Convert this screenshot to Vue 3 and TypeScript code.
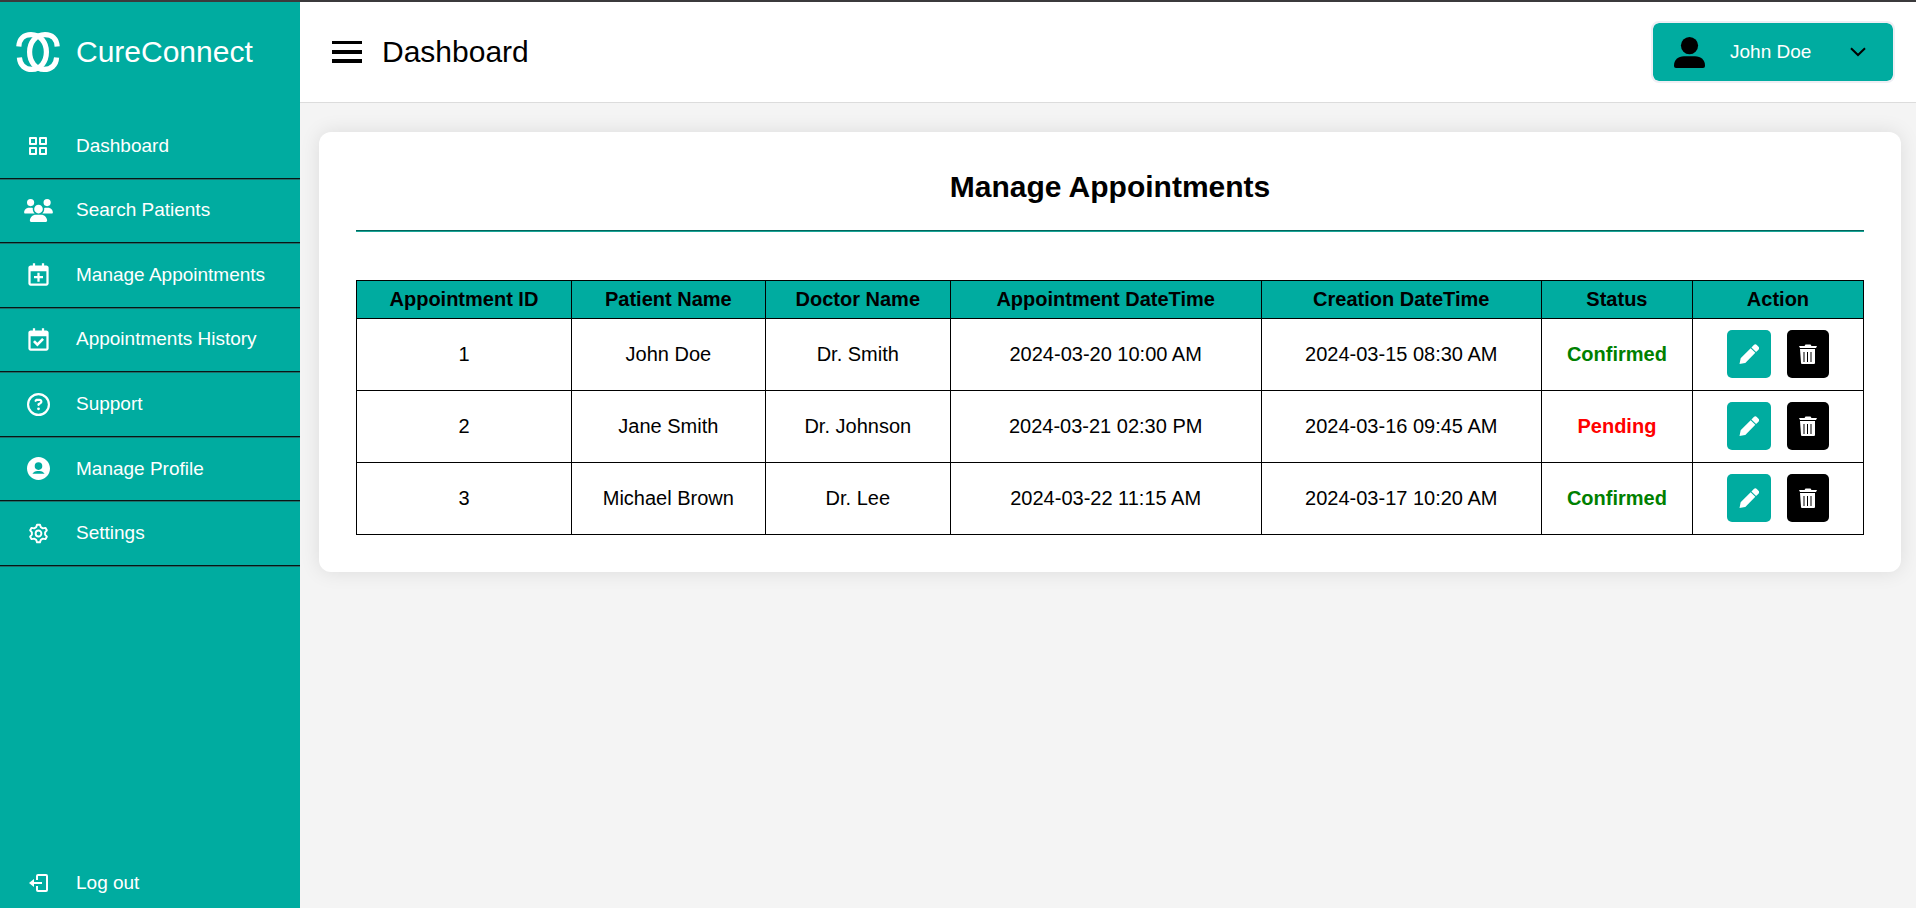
<script setup lang="ts">
interface Shape {
  d: string
  stroke?: boolean
}

interface MenuItem {
  label: string
  viewBox: string
  width: number
  height: number
  shapes: Shape[]
}

interface Appointment {
  id: number
  patient: string
  doctor: string
  scheduled: string
  created: string
  status: 'Confirmed' | 'Pending'
}

const calendarFrame =
  'M19 4h-2V2h-2v2H9V2H7v2H5c-1.103 0-2 .897-2 2v14c0 1.103.897 2 2 2h14c1.103 0 2-.897 2-2V6c0-1.103-.897-2-2-2zM19 20H5V9h14z'

const menu: MenuItem[] = [
  {
    label: 'Dashboard',
    viewBox: '0 0 24 24',
    width: 24,
    height: 24,
    shapes: [
      {
        d: 'M10 3H4a1 1 0 0 0-1 1v6a1 1 0 0 0 1 1h6a1 1 0 0 0 1-1V4a1 1 0 0 0-1-1zM9 9H5V5h4v4zm11-6h-6a1 1 0 0 0-1 1v6a1 1 0 0 0 1 1h6a1 1 0 0 0 1-1V4a1 1 0 0 0-1-1zm-1 6h-4V5h4v4zm-9 4H4a1 1 0 0 0-1 1v6a1 1 0 0 0 1 1h6a1 1 0 0 0 1-1v-6a1 1 0 0 0-1-1zm-1 6H5v-4h4v4zm11-6h-6a1 1 0 0 0-1 1v6a1 1 0 0 0 1 1h6a1 1 0 0 0 1-1v-6a1 1 0 0 0-1-1zm-1 6h-4v-4h4v4z',
      },
    ],
  },
  {
    label: 'Search Patients',
    viewBox: '0 0 640 512',
    width: 29,
    height: 23,
    shapes: [
      {
        d: 'M144 0a80 80 0 1 1 0 160A80 80 0 1 1 144 0zM512 0a80 80 0 1 1 0 160A80 80 0 1 1 512 0zM0 298.700C0 239.800 47.800 192 106.700 192h42.700c15.900 0 31 3.500 44.600 9.700c-1.300 7.200-1.900 14.700-1.900 22.300c0 38.200 16.800 72.500 43.300 96H21.300C9.600 320 0 310.400 0 298.700zM404.600 320c26.600-23.500 43.300-57.800 43.300-96c0-7.600-.7-15-1.900-22.300c13.600-6.300 28.700-9.700 44.600-9.700h42.700C592.200 192 640 239.800 640 298.700c0 11.800-9.600 21.300-21.300 21.300zM224 224a96 96 0 1 1 192 0 96 96 0 1 1-192 0zM128 485.300C128 411.700 187.700 352 261.300 352H378.700C452.300 352 512 411.700 512 485.300c0 14.700-11.900 26.700-26.700 26.700H154.700c-14.700 0-26.700-11.900-26.700-26.700z',
      },
    ],
  },
  {
    label: 'Manage Appointments',
    viewBox: '0 0 24 24',
    width: 27,
    height: 27,
    shapes: [{ d: calendarFrame }, { d: 'M8 15.400h3v3h2v-3h3v-2h-3v-3h-2v3H8z' }],
  },
  {
    label: 'Appointments History',
    viewBox: '0 0 24 24',
    width: 27,
    height: 27,
    shapes: [
      { d: calendarFrame },
      { d: 'm11 18.200 5.900-5.900-1.700-1.700L11 14.800l-2.200-2.200-1.700 1.700z' },
    ],
  },
  {
    label: 'Support',
    viewBox: '0 0 512 512',
    width: 23,
    height: 23,
    shapes: [
      {
        d: 'M464 256A208 208 0 1 0 48 256a208 208 0 1 0 416 0zM0 256a256 256 0 1 1 512 0A256 256 0 1 1 0 256zm169.800-90.700c7.900-22.300 29.100-37.300 52.800-37.300h58.300c34.900 0 63.100 28.300 63.100 63.100c0 22.600-12.100 43.500-31.700 54.800L280 264.400c-.2 13-10.900 23.600-24 23.600c-13.300 0-24-10.700-24-24V250.500c0-8.600 4.600-16.500 12.100-20.800l44.300-25.400c4.700-2.700 7.600-7.700 7.600-13.100c0-8.400-6.800-15.100-15.100-15.100H222.600c-3.400 0-6.400 2.100-7.500 5.300l-.4 1.200c-4.400 12.500-18.200 19-30.600 14.600s-19-18.200-14.600-30.600l.4-1.200zM224 352a32 32 0 1 1 64 0 32 32 0 1 1-64 0z',
      },
    ],
  },
  {
    label: 'Manage Profile',
    viewBox: '2 2 20 20',
    width: 23,
    height: 23,
    shapes: [
      {
        d: 'M12 2C6.579 2 2 6.579 2 12s4.579 10 10 10 10-4.579 10-10S17.421 2 12 2zm0 4.600a3.300 3.300 0 1 1 0 6.600a3.300 3.300 0 1 1 0-6.600zM6.700 16.600c.9-1.500 2.500-2.500 4.300-2.500h2c1.800 0 3.400 1 4.300 2.500z',
      },
    ],
  },
  {
    label: 'Settings',
    viewBox: '0 0 24 24',
    width: 23,
    height: 23,
    shapes: [
      {
        stroke: true,
        d: 'M10.500 2.800h3l.9 2.600 2.100 1.200 2.700-.5 1.500 2.600-1.800 2.100v2.400l1.800 2.100-1.500 2.600-2.700-.5-2.100 1.200-.9 2.600h-3l-.9-2.600-2.100-1.200-2.700.5-1.500-2.600 1.800-2.100v-2.400L3.300 8.700l1.500-2.600 2.700.5 2.100-1.200z',
      },
      { stroke: true, d: 'M12 8.800a3 3.200 0 1 0 0 6.400a3 3.200 0 1 0 0-6.400z' },
    ],
  },
]

const columns: { label: string; width: string }[] = [
  { label: 'Appointment ID', width: '14.26%' },
  { label: 'Patient Name', width: '12.87%' },
  { label: 'Doctor Name', width: '12.27%' },
  { label: 'Appointment DateTime', width: '20.63%' },
  { label: 'Creation DateTime', width: '18.6%' },
  { label: 'Status', width: '10.02%' },
  { label: 'Action', width: '11.35%' },
]

const appointments: Appointment[] = [
  { id: 1, patient: 'John Doe', doctor: 'Dr. Smith', scheduled: '2024-03-20 10:00 AM', created: '2024-03-15 08:30 AM', status: 'Confirmed' },
  { id: 2, patient: 'Jane Smith', doctor: 'Dr. Johnson', scheduled: '2024-03-21 02:30 PM', created: '2024-03-16 09:45 AM', status: 'Pending' },
  { id: 3, patient: 'Michael Brown', doctor: 'Dr. Lee', scheduled: '2024-03-22 11:15 AM', created: '2024-03-17 10:20 AM', status: 'Confirmed' },
]
</script>

<template>
  <div class="page">
    <aside class="sidebar">
      <a class="brand" href="#">
        <span class="icon-cell">
          <svg class="logo" width="44" height="40" viewBox="0 0 44 40" aria-hidden="true">
            <path d="M2.800 14.500C3.200 6.500 8 2.600 15 2.600C24.500 2.600 30.400 10.500 30.400 20S24.500 37.400 16 37.400C9 37.400 4 33.500 3.400 25.500" />
            <path d="M41.200 14.500C40.800 6.500 36 2.600 29 2.600C19.500 2.600 13.600 10.500 13.600 20S19.500 37.400 28 37.400C35 37.400 40 33.500 40.600 25.500" />
          </svg>
        </span>
        <span class="brand-name">CureConnect</span>
      </a>

      <nav class="menu" aria-label="Main">
        <a v-for="item in menu" :key="item.label" class="menu-item" href="#">
          <span class="icon-cell">
            <svg :width="item.width" :height="item.height" :viewBox="item.viewBox" aria-hidden="true">
              <path v-for="shape in item.shapes" :key="shape.d" :class="shape.stroke ? 'line' : 'solid'" :d="shape.d" />
            </svg>
          </span>
          <span>{{ item.label }}</span>
        </a>
      </nav>

      <a class="logout" href="#">
        <span class="icon-cell">
          <svg width="19" height="18" viewBox="0 0 19 18" aria-hidden="true">
            <path class="line" d="M8 6V2a1 1 0 0 1 1-1h8a1 1 0 0 1 1 1v14a1 1 0 0 1-1 1H9a1 1 0 0 1-1-1v-4M4 9h9" />
            <path class="solid" d="M0 9l5-4v8z" />
          </svg>
        </span>
        <span>Log out</span>
      </a>
    </aside>

    <div class="content">
      <header class="topbar">
        <div class="heading">
          <button class="toggle" type="button" aria-label="Toggle menu">
            <svg width="30" height="22" viewBox="0 0 30 22" aria-hidden="true">
              <path d="M0 0h30v3H0zM0 9h30v4H0zM0 18h30v4H0z" />
            </svg>
          </button>
          <h1>Dashboard</h1>
        </div>
        <button class="profile" type="button">
          <svg width="31" height="31" viewBox="0 0 31 31" aria-hidden="true">
            <circle cx="15.500" cy="8.600" r="8.600" />
            <path d="M0 28.500C0 23 4 19.200 10 19.200h11c6 0 10 3.800 10 9.300v.5a2 2 0 0 1-2 2H2a2 2 0 0 1-2-2z" />
          </svg>
          <span>John Doe</span>
          <svg class="chevron" width="16" height="10" viewBox="0 0 16 10" aria-hidden="true">
            <path d="M1 1.200l7 6.800 7-6.800" />
          </svg>
        </button>
      </header>

      <main class="card">
        <h2>Manage Appointments</h2>
        <table>
          <colgroup>
            <col v-for="column in columns" :key="column.label" :style="{ width: column.width }" />
          </colgroup>
          <thead>
            <tr>
              <th v-for="column in columns" :key="column.label" scope="col">{{ column.label }}</th>
            </tr>
          </thead>
          <tbody>
            <tr v-for="row in appointments" :key="row.id">
              <td>{{ row.id }}</td>
              <td>{{ row.patient }}</td>
              <td>{{ row.doctor }}</td>
              <td>{{ row.scheduled }}</td>
              <td>{{ row.created }}</td>
              <td class="status" :class="row.status.toLowerCase()">{{ row.status }}</td>
              <td>
                <div class="actions">
                  <button class="edit" type="button" aria-label="Edit appointment">
                    <svg width="20" height="20" viewBox="2.500 2 19 19" aria-hidden="true">
                      <path d="M8.707 19.707 18 10.414 13.586 6l-9.293 9.293a1.003 1.003 0 0 0-.263.464L3 21l5.242-1.030c.176-.044.337-.135.465-.263zM21 7.414a2 2 0 0 0 0-2.828L19.414 3a2 2 0 0 0-2.828 0L14.300 5.300 18.700 9.700z" />
                    </svg>
                  </button>
                  <button class="delete" type="button" aria-label="Delete appointment">
                    <svg width="18" height="20" viewBox="0 0 18 20" aria-hidden="true">
                      <path d="M0 2h5.500l1-1.500h5l1 1.500H18l-1 2H1zM1 5h15v14a1 1 0 0 1-1 1H3a1 1 0 0 1-1-1zM4.500 8v10h1V8zM8 8v10h1V8zM11.500 8v10h1V8z" fill-rule="evenodd" />
                    </svg>
                  </button>
                </div>
              </td>
            </tr>
          </tbody>
        </table>
      </main>
    </div>
  </div>
</template>

<style>
body {
  margin: 0;
  background: #f4f4f4;
}
</style>

<style scoped>
.page,
.page * {
  box-sizing: border-box;
}

.page {
  display: flex;
  min-height: 100vh;
  border-top: 2px solid #3b3a3c;
  background: #f4f4f4;
  color: #000;
  font-family: "Liberation Sans", Arial, sans-serif;
  font-size: 20px;
}

button {
  border: 0;
  padding: 0;
  background: none;
  font: inherit;
  cursor: pointer;
}

svg {
  display: block;
}

.sidebar {
  display: flex;
  flex: none;
  flex-direction: column;
  width: 300px;
  background: #00aca0;
  font-size: 19px;
}

.sidebar a {
  display: flex;
  align-items: center;
  color: #fff;
  text-decoration: none;
}

.icon-cell {
  display: flex;
  flex: none;
  justify-content: center;
  width: 76px;
}

.solid {
  fill: #fff;
}

.line {
  fill: none;
  stroke: #fff;
  stroke-width: 2;
  stroke-linejoin: round;
}

.brand {
  height: 100px;
}

.brand-name {
  font-size: 30px;
}

.logo path {
  fill: none;
  stroke: #fff;
  stroke-width: 5.200;
}

.menu {
  display: grid;
  grid-auto-rows: 1fr;
  height: 452px;
  margin-top: 12px;
}

.menu-item {
  border-bottom: 1px solid #061716;
  box-shadow: 0 1px #1f6f6a;
}

.logout {
  height: 50px;
  margin-top: auto;
}

.content {
  flex: 1;
  min-width: 0;
}

.topbar {
  display: flex;
  align-items: center;
  justify-content: space-between;
  height: 101px;
  padding: 0 21px 0 32px;
  border-bottom: 1px solid #dcdcdc;
  background: #fff;
}

.heading {
  display: flex;
  align-items: center;
  gap: 20px;
}

h1 {
  margin: 0;
  font-size: 30px;
  font-weight: 400;
}

.profile {
  display: flex;
  align-items: center;
  width: 244px;
  height: 62px;
  padding: 0 27px 0 21px;
  border: 2px solid #efeef4;
  border-radius: 8px;
  background: #00aca0;
  background-clip: padding-box;
  color: #fff;
  font-size: 19px;
}

.profile span {
  margin-left: 25px;
}

.chevron {
  margin-left: auto;
}

.chevron path {
  fill: none;
  stroke: #000;
  stroke-width: 2;
}

.card {
  margin: 29px 15px 29px 19px;
  padding: 37px;
  border-radius: 12px;
  background: #fff;
  box-shadow: 0 0 20px rgba(0, 0, 0, 0.1);
}

h2 {
  margin: 0 0 49px;
  padding-bottom: 25px;
  border-bottom: 1px solid #00665c;
  box-shadow: 0 1px #1aa598;
  font-size: 30px;
  line-height: 36px;
  text-align: center;
}

table {
  width: 100%;
  border-collapse: collapse;
  table-layout: fixed;
}

th,
td {
  padding: 0;
  border: 1px solid #000;
  text-align: center;
}

th {
  height: 38px;
  background: #00aca0;
}

.status {
  font-weight: 700;
}

.confirmed {
  color: #008000;
}

.pending {
  color: #f00;
}

.actions {
  display: flex;
  justify-content: center;
  gap: 16px;
  padding: 11px 0 12px;
}

.actions button {
  display: flex;
  align-items: center;
  height: 48px;
  padding: 0 12px;
  border-radius: 5px;
  fill: #fff;
}

.edit {
  background: #00aca0;
}

.delete {
  background: #000;
}
</style>
